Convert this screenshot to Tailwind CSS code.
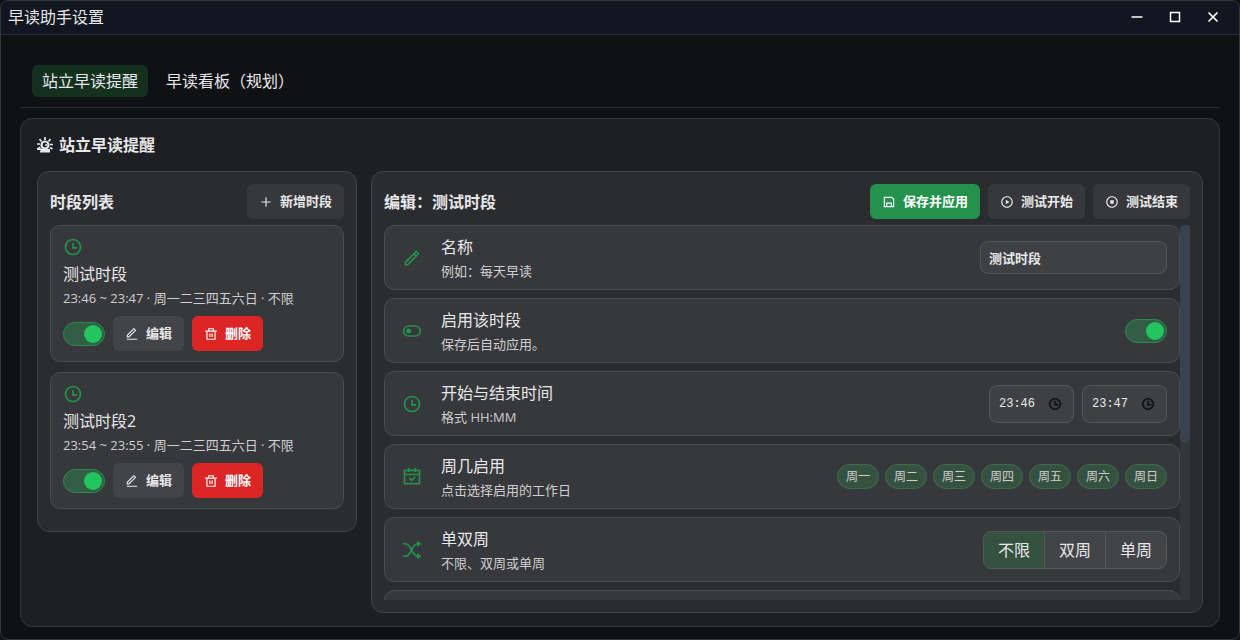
<!DOCTYPE html>
<html lang="zh-CN">
<head>
    <meta charset="UTF-8">
    <meta name="viewport" content="width=device-width, initial-scale=1.0">
    <title>早读助手设置</title>
    <script src="https://cdn.jsdelivr.net/npm/@tailwindcss/browser@4"></script>
</head>
<body class="bg-[#101114] font-['Open_Sans','Noto_Sans_CJK_SC',sans-serif] text-base text-[#e8e8ea]">
    <!-- 图标 -->
    <svg class="hidden">
        <symbol id="i-time" viewBox="0 0 24 24"><path d="M12 22C6.477 22 2 17.523 2 12S6.477 2 12 2s10 4.477 10 10-4.477 10-10 10Zm0-2a8 8 0 1 0 0-16 8 8 0 0 0 0 16Zm1-8h4v2h-6V7h2v5Z"/></symbol>
        <symbol id="i-edit" viewBox="0 0 24 24"><path d="m6.414 16 10.147-10.147-1.415-1.414L5 14.586V16h1.414Zm.829 2H3v-4.243L14.439 2.318a1 1 0 0 1 1.414 0l2.829 2.828a1 1 0 0 1 0 1.415L7.243 18ZM3 20h18v2H3v-2Z"/></symbol>
        <symbol id="i-delete" viewBox="0 0 24 24"><path d="M17 6h5v2h-2v13a1 1 0 0 1-1 1H5a1 1 0 0 1-1-1V8H2V6h5V3a1 1 0 0 1 1-1h8a1 1 0 0 1 1 1v3Zm1 2H6v12h12V8Zm-9 3h2v6H9v-6Zm4 0h2v6h-2v-6ZM9 4v2h6V4H9Z"/></symbol>
        <symbol id="i-pencil" viewBox="0 0 24 24"><path d="m15.728 9.686-1.414-1.414L5 17.586V19h1.414l9.314-9.314Zm1.414-1.414 1.414-1.415-1.414-1.414-1.414 1.414 1.414 1.415ZM7.243 21H3v-4.243L16.435 3.322a1 1 0 0 1 1.414 0l2.829 2.829a1 1 0 0 1 0 1.414L7.243 21Z"/></symbol>
    </svg>

    <div class="flex h-screen flex-col overflow-hidden rounded-lg border border-[#36373a]">
        <!-- 标题栏 -->
        <header class="flex h-[34px] shrink-0 items-center justify-between border-b border-[#303136] bg-[#111620] px-[7px] pb-px">
            <span>早读助手设置</span>
            <div class="flex">
                <button type="button" aria-label="最小化" class="flex h-8 w-[38px] items-center justify-center"><svg class="size-3" viewBox="0 0 12 12"><path d="M.5 6h11" stroke="white" stroke-width="1.5"/></svg></button>
                <button type="button" aria-label="最大化" class="flex h-8 w-[38px] items-center justify-center"><svg class="size-3" viewBox="0 0 12 12" fill="none"><path d="M1.5 1.5h9v9h-9z" stroke="white" stroke-width="1.5"/></svg></button>
                <button type="button" aria-label="关闭" class="flex h-8 w-[38px] items-center justify-center"><svg class="size-3" viewBox="0 0 12 12"><path d="m1.5 1.5 9 9m0-9-9 9" stroke="white" stroke-width="1.7"/></svg></button>
            </div>
        </header>

        <main class="flex min-h-0 flex-1 flex-col px-[19px] pt-[30px] pb-3">
            <!-- 标签页 -->
            <nav class="flex shrink-0 gap-2 border-b border-[#2b2c2f] px-3 pb-[10px]">
                <button type="button" class="h-8 rounded-md bg-[#14301f] px-[10px]">站立早读提醒</button>
                <button type="button" class="h-8 rounded-md px-[10px]">早读看板（规划）</button>
            </nav>

            <section class="mt-[10px] flex min-h-0 flex-1 flex-col rounded-xl border border-[#36373a] bg-[#1e1f22] px-4 pt-[14px] pb-[13px]">
                <h2 class="flex h-6 shrink-0 items-center gap-[6px] font-bold">
                    <svg class="size-4" viewBox="0 0 16 16" fill="none" stroke="currentColor">
                        <path d="M8 0v3M2.500 2l2 2.500M13.500 2l-2 2.500M0 7h3M13 7.500h3M13 10.500l2.500 1.500M3 10l-2.500 2.500" stroke-width="1.700"/>
                        <circle cx="8" cy="8" r="3.500" stroke-width="2.200"/>
                        <path d="M8 8h2" stroke-width="1.500"/>
                        <path d="M0 12.200h4l1 .8h8" stroke-width="1.800"/>
                        <path d="M3 14.500h10" stroke-width="2"/>
                    </svg>
                    站立早读提醒
                </h2>

                <div class="mt-[14px] flex min-h-0 flex-1 items-start gap-[14px]">
                    <!-- 时段列表 -->
                    <aside class="w-80 shrink-0 rounded-xl border border-[#414245] bg-[#2b2c2f] px-3 pt-3 pb-[22px]">
                        <div class="flex items-center justify-between">
                            <h3 class="font-bold">时段列表</h3>
                            <button type="button" class="flex h-[35px] items-center gap-[7px] rounded-md bg-[#37383b] px-3 pt-px text-[13px] font-bold">
                                <svg class="size-[14px]" viewBox="0 0 24 24" fill="currentColor"><path d="M11 11V4h2v7h7v2h-7v7h-2v-7H4v-2h7Z"/></svg>
                                新增时段
                            </button>
                        </div>
                        <ul class="mt-[6px] flex flex-col gap-[10px]">
                            <li class="rounded-[10px] border border-[#4b4c4f] bg-[#37383b] px-3 py-[10px]">
                                <svg class="my-px size-5 fill-[#24914c]"><use href="#i-time"/></svg>
                                <div class="mt-[5px] leading-6">测试时段</div>
                                <div class="mt-[2px] text-[13px] leading-5 text-[#cfcfd1]">23:46 ~ 23:47 · 周一二三四五六日 · 不限</div>
                                <div class="mt-2 flex items-center gap-2">
                                    <input type="checkbox" checked aria-label="启用测试时段" class="h-6 w-[42px] appearance-none rounded-full border border-[#2a8a50] bg-[#325e46] before:mt-[2px] before:ml-5 before:block before:size-[18px] before:rounded-full before:bg-[#22c55e]">
                                    <button type="button" class="flex h-[35px] items-center gap-[7px] rounded-md bg-[#434447] px-3 pt-px text-[13px] font-bold"><svg class="size-[14px] fill-current"><use href="#i-edit"/></svg>编辑</button>
                                    <button type="button" class="flex h-[35px] items-center gap-[7px] rounded-md bg-[#dc2626] px-3 pt-px text-[13px] font-bold text-white"><svg class="size-[14px] fill-current"><use href="#i-delete"/></svg>删除</button>
                                </div>
                            </li>
                            <li class="rounded-[10px] border border-[#4b4c4f] bg-[#37383b] px-3 py-[10px]">
                                <svg class="my-px size-5 fill-[#24914c]"><use href="#i-time"/></svg>
                                <div class="mt-[5px] leading-6">测试时段2</div>
                                <div class="mt-[2px] text-[13px] leading-5 text-[#cfcfd1]">23:54 ~ 23:55 · 周一二三四五六日 · 不限</div>
                                <div class="mt-2 flex items-center gap-2">
                                    <input type="checkbox" checked aria-label="启用测试时段2" class="h-6 w-[42px] appearance-none rounded-full border border-[#2a8a50] bg-[#325e46] before:mt-[2px] before:ml-5 before:block before:size-[18px] before:rounded-full before:bg-[#22c55e]">
                                    <button type="button" class="flex h-[35px] items-center gap-[7px] rounded-md bg-[#434447] px-3 pt-px text-[13px] font-bold"><svg class="size-[14px] fill-current"><use href="#i-edit"/></svg>编辑</button>
                                    <button type="button" class="flex h-[35px] items-center gap-[7px] rounded-md bg-[#dc2626] px-3 pt-px text-[13px] font-bold text-white"><svg class="size-[14px] fill-current"><use href="#i-delete"/></svg>删除</button>
                                </div>
                            </li>
                        </ul>
                    </aside>

                    <!-- 编辑区 -->
                    <div class="flex min-h-0 min-w-0 flex-1 flex-col self-stretch rounded-xl border border-[#414245] bg-[#2b2c2f] p-3">
                        <div class="flex shrink-0 items-center justify-between">
                            <h3 class="font-bold">编辑：测试时段</h3>
                            <div class="flex gap-2">
                                <button type="button" class="flex h-[35px] items-center gap-[7px] rounded-md bg-[#24914c] px-3 pt-px text-[13px] font-bold text-white">
                                    <svg class="size-[14px] fill-current" viewBox="0 0 24 24"><path d="M7 19v-6h10v6h2V7.828L16.172 5H5v14h2ZM4 3h13l4 4v13a1 1 0 0 1-1 1H4a1 1 0 0 1-1-1V4a1 1 0 0 1 1-1Zm5 12v4h6v-4H9Z"/></svg>
                                    保存并应用
                                </button>
                                <button type="button" class="flex h-[35px] items-center gap-[7px] rounded-md bg-[#37383b] px-3 pt-px text-[13px] font-bold">
                                    <svg class="size-[14px] fill-current" viewBox="0 0 24 24"><path d="M12 22C6.477 22 2 17.523 2 12S6.477 2 12 2s10 4.477 10 10-4.477 10-10 10Zm0-2a8 8 0 1 0 0-16 8 8 0 0 0 0 16ZM10.600 8.400l4.900 3.300a.4.4 0 0 1 0 .6l-4.900 3.300a.4.4 0 0 1-.6-.3V8.700a.4.4 0 0 1 .6-.3Z"/></svg>
                                    测试开始
                                </button>
                                <button type="button" class="flex h-[35px] items-center gap-[7px] rounded-md bg-[#37383b] px-3 pt-px text-[13px] font-bold">
                                    <svg class="size-[14px] fill-current" viewBox="0 0 24 24"><path d="M12 22C6.477 22 2 17.523 2 12S6.477 2 12 2s10 4.477 10 10-4.477 10-10 10Zm0-2a8 8 0 1 0 0-16 8 8 0 0 0 0 16ZM9 9h6v6H9V9Z"/></svg>
                                    测试结束
                                </button>
                            </div>
                        </div>

                        <div class="mt-[6px] flex min-h-0 flex-1">
                            <div class="flex min-w-0 flex-1 flex-col gap-2 overflow-hidden">
                                <div class="flex h-[65px] shrink-0 items-center gap-[14px] rounded-[10px] border border-[#4b4c4f] bg-[#37383b] px-3">
                                    <div class="flex w-[30px] justify-center"><svg class="size-5 fill-[#24914c]"><use href="#i-pencil"/></svg></div>
                                    <label for="name" class="flex flex-1 flex-col gap-[2px]">
                                        <span class="leading-6">名称</span>
                                        <span class="text-[13px] leading-5 text-[#cfcfd1]">例如：每天早读</span>
                                    </label>
                                    <input type="text" id="name" value="测试时段" class="h-[33px] w-[187px] rounded-lg border border-[#55565a] bg-[#3f4043] px-2 text-[13px] font-bold">
                                </div>

                                <div class="flex h-[65px] shrink-0 items-center gap-[14px] rounded-[10px] border border-[#4b4c4f] bg-[#37383b] px-3">
                                    <div class="flex w-[30px] justify-center"><svg class="size-5 fill-[#24914c]" viewBox="0 0 24 24"><path d="M8 7a5 5 0 0 0 0 10h8a5 5 0 0 0 0-10H8Zm0-2h8a7 7 0 1 1 0 14H8A7 7 0 1 1 8 5Zm0 10a3 3 0 1 1 0-6 3 3 0 0 1 0 6Z"/></svg></div>
                                    <label for="enabled" class="flex flex-1 flex-col gap-[2px]">
                                        <span class="leading-6">启用该时段</span>
                                        <span class="text-[13px] leading-5 text-[#cfcfd1]">保存后自动应用。</span>
                                    </label>
                                    <input type="checkbox" id="enabled" checked class="h-6 w-[42px] appearance-none rounded-full border border-[#2a8a50] bg-[#325e46] before:mt-[2px] before:ml-5 before:block before:size-[18px] before:rounded-full before:bg-[#22c55e]">
                                </div>

                                <div class="flex h-[65px] shrink-0 items-center gap-[14px] rounded-[10px] border border-[#4b4c4f] bg-[#37383b] px-3">
                                    <div class="flex w-[30px] justify-center"><svg class="size-5 fill-[#24914c]"><use href="#i-time"/></svg></div>
                                    <div class="flex flex-1 flex-col gap-[2px]">
                                        <span class="leading-6">开始与结束时间</span>
                                        <span class="text-[13px] leading-5 text-[#cfcfd1]">格式 HH:MM</span>
                                    </div>
                                    <div class="flex gap-2">
                                        <label class="flex h-[38px] w-[85px] items-center justify-between rounded-lg border border-[#55565a] bg-[#3f4043] pr-[11px] pl-[9px]">
                                            <input type="text" value="23:46" aria-label="开始时间" class="w-10 font-['Liberation_Mono',monospace] text-xs">
                                            <svg class="size-[14px] fill-[#111214] stroke-[#111214]"><use href="#i-time"/></svg>
                                        </label>
                                        <label class="flex h-[38px] w-[85px] items-center justify-between rounded-lg border border-[#55565a] bg-[#3f4043] pr-[11px] pl-[9px]">
                                            <input type="text" value="23:47" aria-label="结束时间" class="w-10 font-['Liberation_Mono',monospace] text-xs">
                                            <svg class="size-[14px] fill-[#111214] stroke-[#111214]"><use href="#i-time"/></svg>
                                        </label>
                                    </div>
                                </div>

                                <div class="flex h-[65px] shrink-0 items-center gap-[14px] rounded-[10px] border border-[#4b4c4f] bg-[#37383b] px-3">
                                    <div class="flex w-[30px] justify-center"><svg class="size-5 fill-[#24914c]" viewBox="0 0 24 24"><path d="M9 1v2h6V1h2v2h4a1 1 0 0 1 1 1v16a1 1 0 0 1-1 1H3a1 1 0 0 1-1-1V4a1 1 0 0 1 1-1h4V1h2Zm11 9H4v9h16v-9Zm-4.964 1.136 1.414 1.414-4.950 4.950-3.536-3.536L9.380 12.550l2.120 2.122 3.536-3.536ZM7 5H4v3h16V5h-3v1h-2V5H9v1H7V5Z"/></svg></div>
                                    <div class="flex flex-1 flex-col gap-[2px]">
                                        <span class="leading-6">周几启用</span>
                                        <span class="text-[13px] leading-5 text-[#cfcfd1]">点击选择启用的工作日</span>
                                    </div>
                                    <div class="flex gap-[6px] text-xs text-[#cfcfd1]">
                                        <button type="button" class="h-[25px] w-[42px] rounded-full border border-[#3e6b50] bg-[#35513f]">周一</button>
                                        <button type="button" class="h-[25px] w-[42px] rounded-full border border-[#3e6b50] bg-[#35513f]">周二</button>
                                        <button type="button" class="h-[25px] w-[42px] rounded-full border border-[#3e6b50] bg-[#35513f]">周三</button>
                                        <button type="button" class="h-[25px] w-[42px] rounded-full border border-[#3e6b50] bg-[#35513f]">周四</button>
                                        <button type="button" class="h-[25px] w-[42px] rounded-full border border-[#3e6b50] bg-[#35513f]">周五</button>
                                        <button type="button" class="h-[25px] w-[42px] rounded-full border border-[#3e6b50] bg-[#35513f]">周六</button>
                                        <button type="button" class="h-[25px] w-[42px] rounded-full border border-[#3e6b50] bg-[#35513f]">周日</button>
                                    </div>
                                </div>

                                <div class="flex h-[65px] shrink-0 items-center gap-[14px] rounded-[10px] border border-[#4b4c4f] bg-[#37383b] px-3">
                                    <div class="flex w-[30px] justify-center"><svg class="size-5" viewBox="0 0 24 24"><path d="M1 4.500h2.500c3.500 0 5.500 2.500 7 5.500l2 4c1.500 3 3.500 5.500 7 5.500M1 19.500h2.500c3.500 0 5.500-2.500 7-5.500l2-4c1.500-3 3.500-5.500 7-5.500" fill="none" stroke="#24914c" stroke-width="2"/><path d="m18 1 5.500 3.500L18 8V1Zm0 15 5.500 3.500L18 23v-7Z" fill="#24914c"/></svg></div>
                                    <div class="flex flex-1 flex-col gap-[2px]">
                                        <span class="leading-6">单双周</span>
                                        <span class="text-[13px] leading-5 text-[#cfcfd1]">不限、双周或单周</span>
                                    </div>
                                    <div class="flex h-[38px] divide-x divide-[#55565a] overflow-hidden rounded-lg border border-[#55565a] bg-[#434447]">
                                        <button type="button" class="w-[61px] bg-[#35513f]">不限</button>
                                        <button type="button" class="w-[61px]">双周</button>
                                        <button type="button" class="w-[60px]">单周</button>
                                    </div>
                                </div>

                                <div class="h-[65px] shrink-0 rounded-[10px] border border-[#4b4c4f] bg-[#37383b]"></div>
                            </div>

                            <!-- 滚动条 -->
                            <div class="w-[10px] shrink-0 bg-[#343538]">
                                <div class="h-[58%] rounded-[5px] bg-[#3b424e]"></div>
                            </div>
                        </div>
                    </div>
                </div>
            </section>
        </main>
    </div>
</body>
</html>
